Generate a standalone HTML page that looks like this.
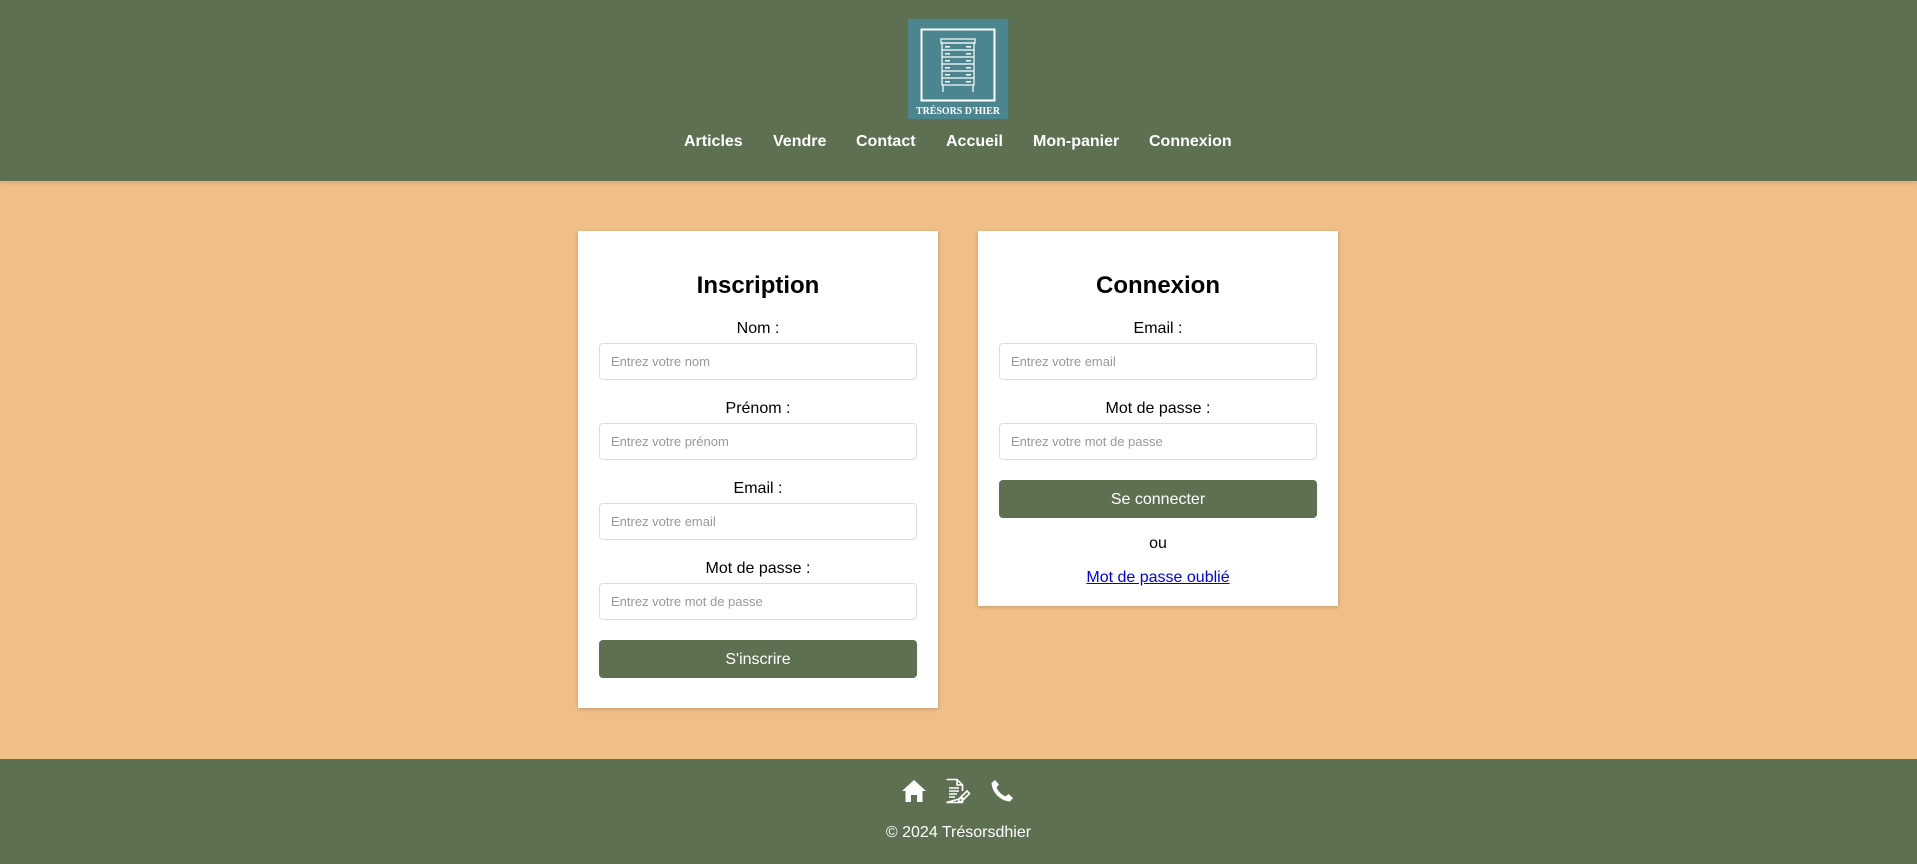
<!DOCTYPE html>
<html><head><meta charset="utf-8"><style>
*{box-sizing:border-box;margin:0;padding:0}
body{width:1917px;height:864px;background:#f0be87;font-family:"Liberation Sans",Arial,sans-serif;position:relative;overflow:hidden}
header{position:absolute;left:0;top:0;width:1917px;height:181px;background:#5e7052;box-shadow:0 2px 4px rgba(0,0,0,.1)}
.logo{position:absolute;left:908px;top:19px;width:100px;height:100px;background:#4a8590}
nav a{position:absolute;top:133px;color:#fff;font-weight:bold;font-size:16px;text-decoration:none;line-height:18px}
.card{position:absolute;background:#fff;box-shadow:0 1px 4px rgba(0,0,0,.2)}
.card h2{position:absolute;left:0;width:100%;text-align:center;font-size:24px;font-weight:bold;color:#000}
.lbl{position:absolute;left:0;width:100%;text-align:center;font-size:16px;color:#000;line-height:18px}
.in{position:absolute;left:21px;width:318px;height:37px;border:1px solid #ddd;border-radius:4px;font-size:13px;color:#999;padding-left:11px;line-height:35px}
.btn{position:absolute;left:21px;width:318px;height:38px;background:#5e7052;border-radius:4px;color:#fff;font-size:16px;text-align:center;line-height:40px}
footer{position:absolute;left:0;top:759px;width:1917px;height:105px;background:#5e7052}
</style></head><body>
<header>
<div class="logo">
<svg width="100" height="100" viewBox="0 0 100 100">
<rect x="13.5" y="10.5" width="73" height="71" fill="none" stroke="#fff" stroke-width="2"/>
<g stroke="#fff" fill="none" stroke-width="1.2">
<rect x="33" y="20" width="34" height="4"/>
<rect x="34" y="24" width="32" height="42"/>
<line x1="34" y1="31" x2="66" y2="31"/><line x1="34" y1="38" x2="66" y2="38"/><line x1="34" y1="45" x2="66" y2="45"/><line x1="34" y1="52" x2="66" y2="52"/><line x1="34" y1="59" x2="66" y2="59"/>
<line x1="35" y1="66" x2="35" y2="73"/><line x1="65" y1="66" x2="65" y2="73"/>
</g>
<g fill="#fff"><rect x="37" y="27" width="5" height="1.5"/><rect x="58" y="27" width="5" height="1.5"/><rect x="37" y="34" width="5" height="1.5"/><rect x="58" y="34" width="5" height="1.5"/><rect x="37" y="41" width="5" height="1.5"/><rect x="58" y="41" width="5" height="1.5"/><rect x="37" y="48" width="5" height="1.5"/><rect x="58" y="48" width="5" height="1.5"/><rect x="37" y="55" width="5" height="1.5"/><rect x="58" y="55" width="5" height="1.5"/><rect x="37" y="62" width="5" height="1.5"/><rect x="58" y="62" width="5" height="1.5"/></g>
<text x="8" y="95" textLength="84" lengthAdjust="spacingAndGlyphs" fill="#fff" font-family="Liberation Serif,serif" font-weight="bold" font-size="10">TRÉSORS D'HIER</text>
</svg></div>
<nav><a style="left:684px">Articles</a><a style="left:773px">Vendre</a><a style="left:856px">Contact</a><a style="left:946px">Accueil</a><a style="left:1033px">Mon-panier</a><a style="left:1149px">Connexion</a></nav>
</header>

<div class="card" style="left:578px;top:231px;width:360px;height:477px">
<h2 style="top:41px">Inscription</h2>
<div class="lbl" style="top:89px">Nom :</div><div class="in" style="top:112px">Entrez votre nom</div>
<div class="lbl" style="top:169px">Prénom :</div><div class="in" style="top:192px">Entrez votre prénom</div>
<div class="lbl" style="top:249px">Email :</div><div class="in" style="top:272px">Entrez votre email</div>
<div class="lbl" style="top:329px">Mot de passe :</div><div class="in" style="top:352px">Entrez votre mot de passe</div>
<div class="btn" style="top:409px">S'inscrire</div>
</div>

<div class="card" style="left:978px;top:231px;width:360px;height:375px">
<h2 style="top:41px">Connexion</h2>
<div class="lbl" style="top:89px">Email :</div><div class="in" style="top:112px">Entrez votre email</div>
<div class="lbl" style="top:169px">Mot de passe :</div><div class="in" style="top:192px">Entrez votre mot de passe</div>
<div class="btn" style="top:249px">Se connecter</div>
<div class="lbl" style="top:304px">ou</div>
<div class="lbl" style="top:338px"><a style="color:#00e;text-decoration:underline">Mot de passe oublié</a></div>
</div>

<footer>
<svg style="position:absolute;left:901px;top:20px" width="26" height="24" viewBox="0 0 26 24"><path d="M13 1 L1 12 H4.5 V23 H10 V16 H16 V23 H21.5 V12 H25 Z" fill="#fff"/></svg>
<svg style="position:absolute;left:945px;top:19px" width="26" height="26" viewBox="0 0 26 26" fill="none" stroke="#fff" stroke-width="1.6"><path d="M1.5 1.5 H12 L17.5 7 V13 M17.5 20 V24.5 H1.5 Z"/><path d="M12 1.5 V7 H17.5"/><path d="M4 10 H14 M4 13 H14 M4 16 H12 M4 19 H10"/><path d="M14 21 L22 13 L24.5 15.5 L16.5 23.5 L13.5 24 Z"/></svg>
<svg style="position:absolute;left:990px;top:20px" width="24" height="24" viewBox="0 0 24 24"><path d="M5 1 L9 5.5 L6.5 8.5 C8 12 11 15.5 15.5 17.5 L18.5 15 L23 19 L20 22.5 C10 22 2 13 1.5 4 Z" fill="#fff"/></svg>
<div style="position:absolute;left:0;top:65px;width:1917px;text-align:center;color:#fff;font-size:16px">© 2024 Trésorsdhier</div>
</footer>
</body></html>
